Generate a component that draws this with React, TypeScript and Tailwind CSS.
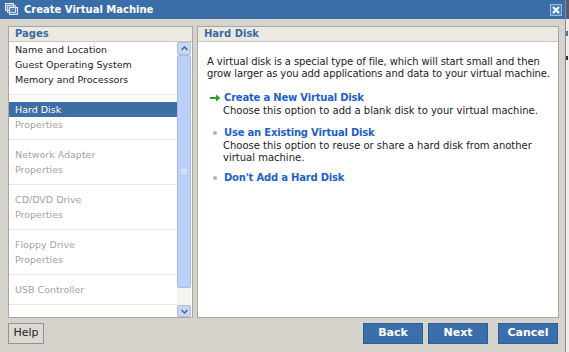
import React from 'react';

const font = { fontFamily: '"DejaVu Sans", Verdana, sans-serif' };

type Group = { title: string; sub?: string; enabled: boolean; selected?: boolean };

const groups: Group[] = [
  { title: 'Hard Disk', sub: 'Properties', enabled: true, selected: true },
  { title: 'Network Adapter', sub: 'Properties', enabled: false },
  { title: 'CD/DVD Drive', sub: 'Properties', enabled: false },
  { title: 'Floppy Drive', sub: 'Properties', enabled: false },
  { title: 'USB Controller', enabled: false },
];

const VmIcon = () => (
  <svg width="15" height="15" viewBox="0 0 15 15">
    <rect x="1.5" y="1.5" width="8" height="7" fill="#6f95c6" stroke="#e8eef8" strokeWidth="1" />
    <rect x="5.5" y="5.5" width="8" height="7" fill="#5a82b8" stroke="#e8eef8" strokeWidth="1" />
    <rect x="3.5" y="3.5" width="8" height="7" fill="none" stroke="#cfdcef" strokeWidth="1" />
  </svg>
);

const GreenArrow = () => (
  <svg width="11" height="8" viewBox="0 0 11 8">
    <path d="M0 4 H8" stroke="#22a52a" strokeWidth="2" />
    <path d="M6 0.5 L10.5 4 L6 7.5 Z" fill="#22a52a" />
  </svg>
);

const Option = ({ icon, title, desc, className = '' }: { icon: 'arrow' | 'dot'; title: string; desc: string[]; className?: string }) => (
  <div className={`flex ${className}`}>
    <div className="w-[17px] h-[14px] flex items-center pl-[3px]">
      {icon === 'arrow' ? <GreenArrow /> : <span className="ml-[3px] w-[4px] h-[4px] rounded-full bg-[#b5b5b5]" />}
    </div>
    <div className="flex flex-col">
      <div className="h-[14px] leading-[14px] font-bold text-[#1e5fc8] tracking-[-0.2px]">{title}</div>
      {desc.map((d) => (
        <div key={d} className="-ml-[1px] leading-[12px] text-[#222]">{d}</div>
      ))}
    </div>
  </div>
);

const PanelHeader = ({ label }: { label: string }) => (
  <div className="h-[15px] bg-[#ece9e2] border-b border-[#c9c6bf] px-[6px] leading-[14px] text-[10px] font-bold text-[#3a6aa3]">
    {label}
  </div>
);

export default function App() {
  return (
    <div className="w-[569px] h-[352px] flex bg-[#d4d0c8] overflow-hidden text-[10px]" style={font}>
      <div className="w-[565px] flex flex-col bg-[#d6d3cd]">
        {/* title bar */}
        <div className="h-[19px] bg-[#3b6ea9] flex items-center pl-[4px] pr-[3px]">
          <VmIcon />
          <span className="ml-[5px] text-white font-bold text-[10px]">Create Virtual Machine</span>
          <div className="ml-auto w-[12px] h-[12px] mt-[1px] border border-[#9fbbe0] bg-[#4a7fc0] flex items-center justify-center">
            <svg width="8" height="8" viewBox="0 0 8 8">
              <path d="M1 1 L7 7 M7 1 L1 7" stroke="white" strokeWidth="2" />
            </svg>
          </div>
        </div>

        <div className="flex gap-[4px] pl-[8px] pr-[6px] pt-[7px] h-[299px]">
          {/* pages panel */}
          <div className="w-[185px] h-[292px] border border-[#a9a69f] bg-white flex flex-col">
            <PanelHeader label="Pages" />
            <div className="flex flex-1 min-h-0 text-[9.5px]">
              <div className="flex-1 overflow-hidden">
                <div className="px-[6px] leading-[15px] text-[#222]">
                  <div>Name and Location</div>
                  <div>Guest Operating System</div>
                  <div>Memory and Processors</div>
                </div>
                <div className="h-[7px]" />
                {groups.map((g) => (
                  <div key={g.title} className="border-t border-[#e9e7e1] py-[7px] leading-[15px]">
                    <div
                      className={
                        g.selected
                          ? 'px-[6px] bg-[#3d6ea6] text-white'
                          : g.enabled
                          ? 'px-[6px] text-[#222]'
                          : 'px-[6px] text-[#a3a3a3]'
                      }
                    >
                      {g.title}
                    </div>
                    {g.sub && <div className="px-[6px] text-[#a3a3a3]">{g.sub}</div>}
                  </div>
                ))}
                <div className="border-t border-[#e9e7e1]" />
              </div>
              {/* scrollbar */}
              <div className="w-[14px] mr-[1px] flex flex-col bg-[#f4f3ef]">
                <div className="h-[13px] bg-[#c8d6f6] border border-[#aebfe6] rounded-[2px] flex items-center justify-center">
                  <svg width="7" height="5" viewBox="0 0 7 5">
                    <path d="M0.5 4 L3.5 1 L6.5 4" stroke="#4d6185" strokeWidth="1.5" fill="none" />
                  </svg>
                </div>
                <div className="h-[233px] bg-[#bccff9] border border-[#a9bce8] rounded-[2px] flex items-center justify-center">
                  <div className="flex flex-col gap-[1px]">
                    <div className="w-[6px] h-[1px] bg-[#e6eeff]" />
                    <div className="w-[6px] h-[1px] bg-[#e6eeff]" />
                    <div className="w-[6px] h-[1px] bg-[#e6eeff]" />
                  </div>
                </div>
                <div className="flex-1" />
                <div className="h-[12px] bg-[#c8d6f6] border border-[#aebfe6] rounded-[2px] flex items-center justify-center">
                  <svg width="7" height="5" viewBox="0 0 7 5">
                    <path d="M0.5 1 L3.5 4 L6.5 1" stroke="#4d6185" strokeWidth="1.5" fill="none" />
                  </svg>
                </div>
              </div>
            </div>
          </div>

          {/* content panel */}
          <div className="flex-1 h-[292px] border border-[#a9a69f] bg-white flex flex-col">
            <PanelHeader label="Hard Disk" />
            <div className="pl-[9px] pt-[14px] text-[#222]">
              <div className="leading-[12px] tracking-[-0.1px]">
                A virtual disk is a special type of file, which will start small and then
                <br />
                grow larger as you add applications and data to your virtual machine.
              </div>
              <div className="mt-[11px] flex flex-col">
                <Option
                  icon="arrow"
                  title="Create a New Virtual Disk"
                  desc={['Choose this option to add a blank disk to your virtual machine.']}
                />
                <Option
                  className="mt-[9px]"
                  icon="dot"
                  title="Use an Existing Virtual Disk"
                  desc={['Choose this option to reuse or share a hard disk from another', 'virtual machine.']}
                />
                <Option className="mt-[7px]" icon="dot" title="Don't Add a Hard Disk" desc={[]} />
              </div>
            </div>
          </div>
        </div>

        {/* footer buttons */}
        <div className="flex items-start pl-[8px] pr-[7px] pt-[5px]">
          <button className="w-[36px] h-[21px] border border-[#96938c] bg-[#dcd9d2] text-[#222] text-[11px]">Help</button>
          <div className="ml-auto flex gap-[5px]">
            <button className="w-[60px] h-[21px] bg-[#3b6fab] border border-[#2f5d94] text-white font-bold text-[11px]">Back</button>
            <button className="w-[60px] h-[21px] bg-[#3b6fab] border border-[#2f5d94] text-white font-bold text-[11px]">Next</button>
            <button className="ml-[5px] w-[60px] h-[21px] bg-[#3b6fab] border border-[#2f5d94] text-white font-bold text-[11px]">Cancel</button>
          </div>
        </div>
      </div>

      {/* sliver of the page behind the dialog */}
      <div className="flex-1 flex flex-col bg-[#efeeea] border-l border-[#8d8a84]">
        <div className="h-[19px] bg-[#5b5a66]" />
        <div className="mt-[12px] h-[5px] w-[2px] bg-[#5d6fb0]" />
        <div className="mt-[20px] h-[4px] w-[2px] bg-[#333]" />
      </div>
    </div>
  );
}
